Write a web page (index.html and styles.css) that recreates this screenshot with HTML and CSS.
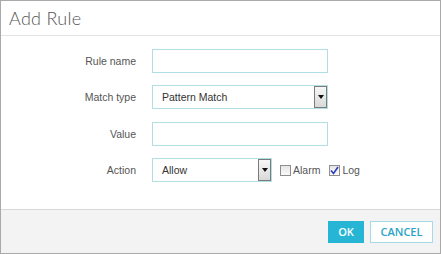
FILE: index.html
```html
<!DOCTYPE html>
<html lang="en">
<head>
  <meta charset="UTF-8">
  <title>Add Rule</title>
  <link rel="stylesheet" href="styles.css">
</head>
<body>
  <div class="dialog">
    <div class="dialog-header">
      <h1>Add Rule</h1>
    </div>
    <div class="dialog-body">
      <div class="form">
        <label class="label">Rule name</label>
        <div class="field"><div class="text-input wide"></div></div>

        <label class="label">Match type</label>
        <div class="field">
          <div class="select wide">
            <span class="select-value">Pattern Match</span>
            <span class="select-btn"><span class="arrow"></span></span>
          </div>
        </div>

        <label class="label">Value</label>
        <div class="field"><div class="text-input wide"></div></div>

        <label class="label">Action</label>
        <div class="field">
          <div class="select narrow">
            <span class="select-value">Allow</span>
            <span class="select-btn"><span class="arrow"></span></span>
          </div>
          <span class="check"><span class="box"></span>Alarm</span>
          <span class="check"><span class="box checked">
            <svg width="9" height="9" viewBox="0 0 9 9"><path d="M1 4.5 L3.5 7.5 L8 1" fill="none" stroke="#2b3fb8" stroke-width="1.6"/></svg>
          </span>Log</span>
        </div>
      </div>
    </div>
    <div class="dialog-footer">
      <button class="btn btn-primary">OK</button>
      <button class="btn btn-default">CANCEL</button>
    </div>
  </div>
</body>
</html>
```

FILE: styles.css
```css
html, body {
  margin: 0;
  padding: 0;
  background: #fff;
}

.dialog {
  width: 439px;
  height: 252px;
  border: 1px solid #a9a9a9;
  display: flex;
  flex-direction: column;
  font-family: 'Liberation Sans', Arial, sans-serif;
}

.dialog-header {
  height: 34px;
  border-bottom: 1px solid #e3e3e3;
  display: flex;
  align-items: center;
  padding-left: 8px;
}

h1 {
  margin: 0;
  font-family: 'Lato', sans-serif;
  font-weight: 300;
  font-size: 18px;
  color: #555;
  letter-spacing: 0.3px;
}

.dialog-body {
  flex: 1;
  padding-top: 13px;
}

.form {
  display: grid;
  grid-template-columns: 135px auto;
  grid-template-rows: 24px 24px 25px 24px;
  column-gap: 16px;
  row-gap: 12px;
}

.label {
  font-size: 10.5px;
  color: #555;
  text-align: right;
  align-self: center;
}

.field {
  display: flex;
  align-items: flex-end;
}

.text-input,
.select {
  box-sizing: border-box;
  height: 24px;
  border: 1px solid #b2dee6;
  background: #fff;
}

.wide {
  width: 176px;
}

.narrow {
  width: 120px;
}

.select {
  display: flex;
  align-items: center;
  justify-content: space-between;
  padding-left: 9px;
  font-size: 10.5px;
  color: #333;
}

.select-btn {
  box-sizing: border-box;
  width: 13px;
  height: 22px;
  border: 1px solid #7b7b7b;
  background: linear-gradient(#f7f7f7, #d9d9d9);
  display: flex;
  align-items: center;
  justify-content: center;
}

.arrow {
  width: 0;
  height: 0;
  border-left: 3px solid transparent;
  border-right: 3px solid transparent;
  border-top: 4px solid #111;
}

.check {
  display: flex;
  align-items: center;
  align-self: center;
  font-size: 10.5px;
  color: #555;
  margin-left: 8px;
}

.check + .check {
  margin-left: 9px;
}

.box {
  box-sizing: border-box;
  width: 11px;
  height: 11px;
  border: 1px solid #8e8e8e;
  background: linear-gradient(#e6e6e6, #fafafa);
  margin-right: 2px;
  display: flex;
  align-items: center;
  justify-content: center;
}

.dialog-footer {
  height: 43px;
  border-top: 1px solid #d8d8d8;
  background: #f3f3f3;
  display: flex;
  justify-content: flex-end;
  align-items: center;
  gap: 6px;
  padding-right: 7px;
}

.btn {
  height: 22px;
  font-family: 'Open Sans', sans-serif;
  font-weight: 600;
  font-size: 11px;
  border-radius: 0;
  cursor: pointer;
}

.btn-primary {
  width: 36px;
  background: #27b5d6;
  color: #fff;
  border: none;
}

.btn-default {
  width: 63px;
  background: #fff;
  color: #2aa4c6;
  border: 1px solid #a5dbe8;
}
```
